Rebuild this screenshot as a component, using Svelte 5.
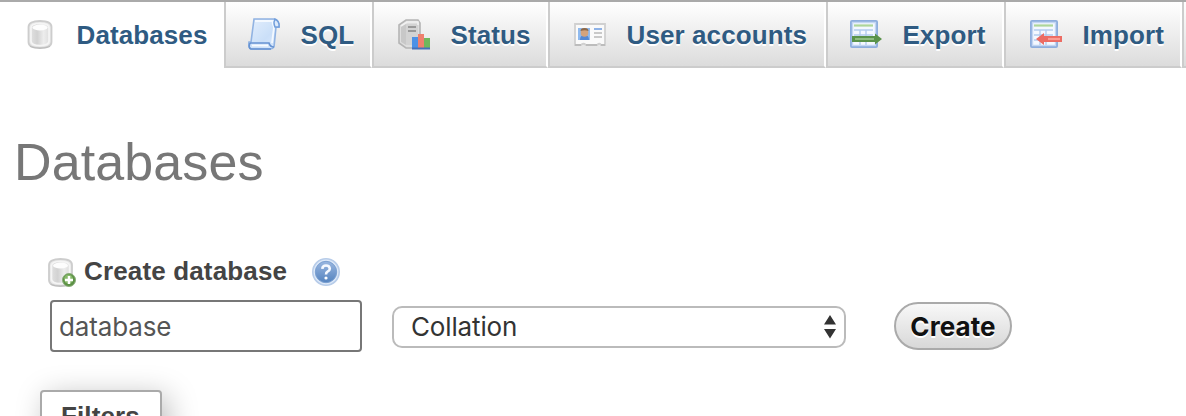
<script>
  const tabs = [
    { label: 'Databases', icon: 'database', width: 224, pad: 24 },
    { label: 'SQL', icon: 'sql', width: 148, pad: 22 },
    { label: 'Status', icon: 'status', width: 176, pad: 24 },
    { label: 'User accounts', icon: 'users', width: 278, pad: 24 },
    { label: 'Export', icon: 'export', width: 178, pad: 22 },
    { label: 'Import', icon: 'import', width: 178, pad: 24 },
    { label: '', icon: '', width: 160, pad: 24 }
  ];
</script>

{#snippet cylinder()}
  <path d="M4.5 9Q4.5 3 16 3T27.5 9V24Q27.5 30 16 30T4.5 24Z" fill="#e9e9e9" stroke="#cdcdcd" stroke-width="1.8" />
  <path d="M7 10Q7 5.5 16 5.5T25 10V23Q25 27.5 16 27.5T7 23Z" fill="url(#metal)" stroke="#f5f5f5" stroke-width="1.6" />
  <ellipse cx="16" cy="9.5" rx="7.5" ry="3" fill="#fdfdfd" />
  <path d="M6 28.5Q16 32 26 28.5" fill="none" stroke="#999" stroke-opacity=".35" />
{/snippet}

{#snippet sheet()}
  <rect x="3" y="3" width="26" height="26" rx="1" fill="#f4f8ff" stroke="#8eaedd" stroke-width="2" />
  <path d="M4.5 4.5H27.5V27.5H4.5Z" fill="none" stroke="#c3d6f2" stroke-width="1.4" />
  <path d="M6 7.5H25" stroke="#add69a" stroke-width="2.2" />
  <path d="M6 12H25M6 17H25M6 22H25M12 12V27M18 12V27" stroke="#b3ccee" stroke-width="1.4" fill="none" />
{/snippet}

<svg class="defs" width="0" height="0" aria-hidden="true">
  <defs>
    <linearGradient id="metal"><stop stop-color="#e0e0e0" /><stop offset=".35" stop-color="#d2d2d2" /><stop offset=".7" stop-color="#ededed" /><stop offset="1" stop-color="#dedede" /></linearGradient>
    <linearGradient id="paper" x2="1" y2="1"><stop stop-color="#e4effd" /><stop offset=".6" stop-color="#cadff8" /><stop offset="1" stop-color="#dceafd" /></linearGradient>
    <linearGradient id="help" x2="0" y2="1"><stop stop-color="#9ab7e0" /><stop offset="1" stop-color="#5483bf" /></linearGradient>
  </defs>
</svg>

<main>
  <nav>
    {#each tabs as tab, i}
      <div class="tab" class:active={i === 0} style="width:{tab.width}px;padding-left:{tab.pad}px">
        {#if tab.icon}
          <svg width="32" height="32" viewBox="0 0 32 32">
            {#if tab.icon === 'database'}
              {@render cylinder()}
            {:else if tab.icon === 'sql'}
              <path d="M6 1H27Q31 2 31 9H28L26 29Q25 31 22 31H3Q0 30 1 24H3Z" fill="url(#paper)" stroke="#91b3e2" stroke-width="1.6" />
              <path d="M7 3H25Q24 5 26 9L24 25" fill="none" stroke="#f4f9ff" stroke-width="1.8" />
              <path d="M27 2Q25 4 27 9H31V6Q30 2 26 1" fill="#dceafb" stroke="#719edb" stroke-width="1.5" />
              <path d="M2 25H21Q22 29 26 29M2 25Q0 30 3 31H23" fill="none" stroke="#6793d2" stroke-width="1.6" />
              <path d="M4 27.5H20" stroke="#f7fbff" stroke-width="1.8" />
            {:else if tab.icon === 'status'}
              <path d="M1 7L8 2H20L22 5V28L17 30H8L1 25Z" fill="#dedede" stroke="#b5b5b5" stroke-width="1.6" />
              <path d="M3 8L8 6V27L3 24Z" fill="#c8c8c8" />
              <path d="M8 6H20V27H8Z" fill="#d3d3d3" />
              <path d="M3 8L9 4H20V7" fill="none" stroke="#f1f1f1" stroke-width="1.6" />
              <path d="M10 9H18M10 13H18" stroke="#999" stroke-width="1.8" />
              <path d="M14 19H20V31H14Z" fill="#4d91e5" />
              <path d="M20 16H26V30H20Z" fill="#ef806e" />
              <path d="M26 20H32V30H26Z" fill="#70b75c" />
              <path d="M14 30.5H32" stroke="#4670b8" stroke-width="2" />
            {:else if tab.icon === 'users'}
              <path d="M1 6H31V27H27Q26 24.5 23 27H12Q9 24.5 7 27H1Z" fill="#fafafa" stroke="#d0d0d0" stroke-width="1.8" />
              <path d="M1 27H7M12 27H23M27 27H31" stroke="#b5b5b5" stroke-width="1.4" />
              <path d="M4 10H16V22H4Z" fill="#8fbaef" />
              <path d="M6 22Q6 17 10.5 17T15 22Z" fill="#5489d5" />
              <ellipse cx="10.5" cy="14.5" rx="3.8" ry="4.3" fill="#d4a37c" />
              <path d="M6.5 13Q6.5 10 10.5 10T14.5 13Q11 11.5 6.5 13" fill="#8d6949" />
              <path d="M20 11H28" stroke="#8eb2e7" stroke-width="2" />
              <path d="M20 15H28M20 19H28" stroke="#c9c9c9" stroke-width="1.8" />
            {:else if tab.icon === 'export'}
              <g transform="translate(-2 0)">{@render sheet()}</g>
              <path d="M2 18H25V15.5L32 21L25 26.5V24H2Z" fill="#5a934a" />
              <path d="M5 21H24" stroke="#8ebd80" stroke-width="2" fill="none" />
            {:else if tab.icon === 'import'}
              <g transform="translate(-2 0)">{@render sheet()}</g>
              <path d="M32 18H14V15L6 21L14 27V24H32Z" fill="#ec6c64" />
              <path d="M18 21H30" stroke="#fb9c93" stroke-width="2.2" />
            {/if}
          </svg>
          <span>{tab.label}</span>
        {/if}
      </div>
    {/each}
  </nav>

  <h1>Databases</h1>

  <form onsubmit={(e) => e.preventDefault()}>
    <div class="legend">
      <svg width="32" height="32" viewBox="0 0 32 32">
        <g transform="translate(-1.5 0)">{@render cylinder()}</g>
        <circle cx="23" cy="24" r="6.5" fill="#5c9145" stroke="#8bae7b" />
        <circle cx="22.5" cy="23" r="4.5" fill="#86b96a" />
        <path d="M23 20V28M19 24H27" stroke="#fff" stroke-width="2.5" />
      </svg>
      <strong>Create database</strong>
      <svg class="help" width="32" height="32" viewBox="0 0 32 32">
        <circle cx="16" cy="16" r="13.2" fill="#dce8f8" stroke="#b7cce9" stroke-width="1.6" />
        <circle cx="16" cy="16" r="10.7" fill="url(#help)" stroke="#7ba0d1" />
        <path d="M12.3 12.8Q12.5 9.5 16 9.5T19.8 12.7Q19.8 14.5 17.5 15.7Q16 16.5 16 18.5" fill="none" stroke="#f5f9ff" stroke-width="2.6" />
        <circle cx="16" cy="22" r="1.6" fill="#fff" />
      </svg>
    </div>
    <div class="fields">
      <input type="text" value="database" aria-label="Database name" />
      <div class="select">
        <span>Collation</span>
        <svg width="12" height="24" viewBox="0 0 12 24"><path d="M0 9.5L6 0L12 9.5ZM0 14L6 23.5L12 14Z" fill="#333" /></svg>
      </div>
      <button>Create</button>
    </div>
  </form>

  <section class="filters">Filters</section>
</main>

<style>
  :global(body) { margin: 0; background: #fff; overflow: hidden; }
  main {
    box-sizing: border-box;
    width: 1186px;
    height: 416px;
    overflow: hidden;
    border-top: 2px solid #aaa;
    font-family: "Liberation Sans", Arial, sans-serif;
    color: #444;
  }
  .defs { display: block; }
  svg { display: block; flex: none; }
  nav { display: flex; height: 66px; }
  .tab {
    box-sizing: border-box;
    flex: none;
    display: flex;
    align-items: center;
    gap: 20px;
    border-left: 2px solid #ccc;
    border-right: 2px solid #fff;
    border-bottom: 2px solid #ccc;
    background: linear-gradient(#fff, #dcdcdc);
    color: #2f5b82;
    font-size: 26px;
    line-height: 30px;
    font-weight: bold;
    letter-spacing: .1px;
    white-space: nowrap;
    text-shadow: 0 2px 0 #fff;
  }
  .tab.active { border: 0; background: #fff; padding-bottom: 2px; }
  .tab span { padding: 2px 0 0 .5px; }
  h1 {
    margin: 64px 0 0 14px;
    font-size: 52px;
    line-height: 60px;
    font-weight: normal;
    letter-spacing: .1px;
    color: #777;
  }
  form { margin: 64px 0 0 46px; }
  .legend { display: flex; align-items: center; height: 32px; }
  .legend strong { margin-left: 6px; font-size: 26px; line-height: 30px; letter-spacing: .15px; padding-bottom: 2px; }
  .help { margin-left: 23px; }
  .fields { display: flex; align-items: center; margin: 12px 0 0 4px; height: 52px; font-family: Inter, sans-serif; }
  input {
    box-sizing: border-box;
    width: 312px;
    height: 52px;
    margin: 0;
    padding: 0 7px;
    border: 2px solid #777;
    border-radius: 4px;
    background: #fff;
    color: #555;
    font: 26px Inter, sans-serif;
    letter-spacing: -.15px;
    outline: 0;
  }
  .select {
    box-sizing: border-box;
    display: flex;
    align-items: center;
    justify-content: space-between;
    width: 454px;
    height: 42px;
    margin: 2px 0 0 30px;
    padding: 0 8px 0 17px;
    border: 2px solid #bbb;
    border-radius: 10px;
    color: #333;
    font-size: 26px;
    letter-spacing: -.15px;
  }
  .select span { padding-bottom: 2px; }
  button {
    box-sizing: border-box;
    width: 118px;
    height: 48px;
    margin: 0 0 0 48px;
    padding: 0;
    border: 2px solid #aaa;
    border-radius: 24px;
    background: linear-gradient(#f8f8f8, #d8d8d8);
    color: #111;
    font: bold 26px Inter, sans-serif;
    letter-spacing: .1px;
    text-shadow: 0 2px 0 #fff;
  }
  .filters {
    box-sizing: border-box;
    width: 122px;
    height: 80px;
    margin: 38px 0 0 40px;
    padding: 9px 0 0 19px;
    border: 2px solid #aaa;
    border-radius: 4px;
    background: #fff;
    box-shadow: 6px 6px 30px #bbb;
    font-size: 26px;
    line-height: 30px;
    font-weight: bold;
    letter-spacing: .1px;
  }
</style>
